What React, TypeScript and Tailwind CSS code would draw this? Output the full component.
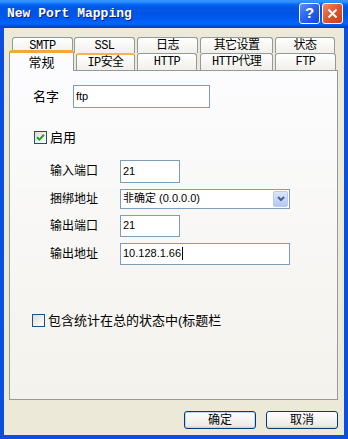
import React from 'react';

const ui = '"Liberation Sans", "Noto Sans CJK SC", sans-serif';
const tabFont = '"Liberation Mono", "Noto Sans CJK SC", monospace';

function Tab({ label, className }: { label: string; className: string }) {
  return (
    <div
      className={`flex items-center justify-center rounded-t-[3px] border border-b-0 border-[#919b9c] bg-[linear-gradient(to_bottom,#ffffff,#f0efe9)] text-[12px] tracking-[-0.6px] text-black ${className}`}
      style={{ fontFamily: tabFont }}
    >
      {label}
    </div>
  );
}

function CheckBox({ checked }: { checked?: boolean }) {
  return (
    <div className="flex h-[13px] w-[13px] items-center justify-center border border-[#1c5180] bg-[linear-gradient(135deg,#dcdcd7,#ffffff)]">
      {checked && (
        <svg width="9" height="9" viewBox="0 0 9 9">
          <path d="M1 4.2 L3.4 6.6 L8 1.8" stroke="#21a121" strokeWidth="2" fill="none" />
        </svg>
      )}
    </div>
  );
}

function Field({ label, children }: { label: string; children: React.ReactNode }) {
  return (
    <div className="flex items-center">
      <div className="w-[70px] text-[12px] text-black">{label}</div>
      {children}
    </div>
  );
}

function TextBox({ value, className, caret }: { value: string; className: string; caret?: boolean }) {
  return (
    <div className={`flex items-center border border-[#7f9db9] bg-white pl-[2px] text-[11px] text-black ${className}`}>
      {value}
      {caret && <span className="ml-[1px] h-[13px] w-[1px] bg-black" />}
    </div>
  );
}

export default function App() {
  return (
    <div className="flex h-[439px] w-[348px] flex-col overflow-hidden bg-[#0b4fe0]" style={{ fontFamily: ui }}>
      {/* title bar */}
      <div className="flex h-[28px] items-center justify-between bg-[linear-gradient(to_bottom,#3a93ff_0%,#288eff_8%,#0a6cf8_14%,#0058e8_24%,#0054e3_50%,#005bf5_70%,#0266fb_82%,#0058e6_90%,#0048c8_96%,#003ea8_100%)] pl-[7px] pr-[5px]">
        <span
          className="text-[13px] font-bold text-white [text-shadow:1px_1px_0_#0a1883]"
          style={{ fontFamily: '"Liberation Mono", monospace' }}
        >
          New Port Mapping
        </span>
        <div className="flex items-center gap-[2px] pb-[2px]">
          <div className="flex h-[21px] w-[21px] items-center justify-center rounded-[3px] border border-white bg-[linear-gradient(135deg,#5b8ff8,#2a62ea_50%,#1447d6)] text-[15px] font-bold text-white">
            ?
          </div>
          <div className="flex h-[21px] w-[21px] items-center justify-center rounded-[3px] border border-white bg-[linear-gradient(135deg,#f08a6a,#e0532f_50%,#c93f1c)]">
            <svg width="11" height="11" viewBox="0 0 11 11">
              <path d="M1.5 1.5 L9.5 9.5 M9.5 1.5 L1.5 9.5" stroke="white" strokeWidth="2" />
            </svg>
          </div>
        </div>
      </div>

      {/* body */}
      <div className="mx-[4px] mb-[4px] flex flex-1 flex-col bg-[#ece9d8] pt-[9px]">
        <div className="ml-[5px] w-[329px]">
          {/* back row */}
          <div className="flex h-[16px]">
            <Tab label="SMTP" className="ml-[3px] w-[61px]" />
            <Tab label="SSL" className="ml-[1px] w-[61px]" />
            <Tab label="日志" className="ml-[2px] w-[61px]" />
            <Tab label="其它设置" className="ml-[2px] w-[73px]" />
            <Tab label="状态" className="ml-[2px] w-[60px]" />
          </div>
          {/* front row */}
          <div className="flex h-[17px] items-end">
            <div
              className="relative z-10 mb-[-1px] flex h-[21px] w-[65px] items-start justify-center rounded-t-[3px] border border-b-0 border-[#919b9c] border-t-[3px] border-t-[#f0a93a] bg-[#fcfcfe] pt-[1px] text-[13px] text-black"
              style={{ fontFamily: tabFont }}
            >
              常规
            </div>
            <Tab label="IP安全" className="ml-[2px] h-[17px] w-[59px] border-t-2 border-t-[#f3b44a]" />
            <Tab label="HTTP" className="ml-[2px] h-[17px] w-[60px]" />
            <Tab label="HTTP代理" className="ml-[3px] h-[17px] w-[73px]" />
            <Tab label="FTP" className="ml-[2px] h-[17px] w-[61px]" />
          </div>

          {/* tab page */}
          <div className="flex h-[330px] flex-col border border-[#919b9c] bg-[linear-gradient(to_bottom,#fcfcfe,#f3f2ec)] pt-[14px] text-[12px] text-black">
            <div className="flex items-center pl-[23px]">
              <div className="w-[40px] text-[13px]">名字</div>
              <TextBox value="ftp" className="h-[23px] w-[137px]" />
            </div>

            <div className="mt-[20px] flex items-center gap-[3px] pl-[24px] text-[13px]">
              <CheckBox checked />
              <span>启用</span>
            </div>

            <div className="mt-[12px] flex flex-col gap-[6px] pl-[40px]">
              <Field label="输入端口">
                <TextBox value="21" className="h-[23px] w-[60px]" />
              </Field>
              <Field label="捆绑地址">
                <div className="flex h-[20px] w-[170px] items-center justify-between border border-[#7f9db9] bg-white pl-[2px] pr-[1px] text-[11px]">
                  <span>非确定 (0.0.0.0)</span>
                  <div className="flex h-[16px] w-[15px] items-center justify-center rounded-[2px] border border-[#b9c9ef] bg-[linear-gradient(to_bottom,#dbe6fd,#b4c8f6)]">
                    <svg width="8" height="6" viewBox="0 0 8 6">
                      <path d="M1 1 L4 4 L7 1" stroke="#4d6185" strokeWidth="2" fill="none" />
                    </svg>
                  </div>
                </div>
              </Field>
              <Field label="输出端口">
                <TextBox value="21" className="h-[22px] w-[60px]" />
              </Field>
              <Field label="输出地址">
                <TextBox value="10.128.1.66" caret className="h-[22px] w-[170px]" />
              </Field>
            </div>

            <div className="mt-[48px] flex items-center gap-[3px] pl-[22px]">
              <CheckBox />
              <div className="whitespace-nowrap text-[13px] leading-[16px]">包含统计在总的状态中(标题栏</div>
            </div>
          </div>
        </div>

        <div className="mt-[11px] flex justify-end gap-[10px] pr-[6px] text-[12px] text-black">
          <button className="flex h-[18px] w-[72px] items-center justify-center rounded-[3px] border border-[#003c74] bg-[linear-gradient(to_bottom,#ffffff,#ecebe6_85%,#d8d0c4)] shadow-[inset_0_0_0_1px_#c0d6f8]">
            确定
          </button>
          <button className="flex h-[18px] w-[72px] items-center justify-center rounded-[3px] border border-[#003c74] bg-[linear-gradient(to_bottom,#ffffff,#ecebe6_85%,#d8d0c4)]">
            取消
          </button>
        </div>
      </div>
    </div>
  );
}
